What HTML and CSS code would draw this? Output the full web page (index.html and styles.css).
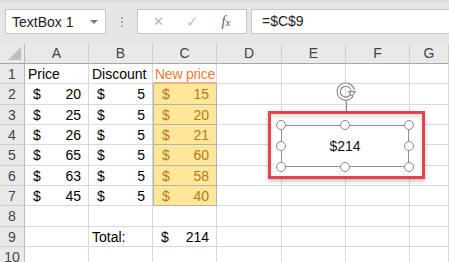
FILE: index.html
```html
<!DOCTYPE html>
<html lang="en">
<head>
    <meta charset="UTF-8">
    <title>Excel - TextBox</title>
    <link rel="stylesheet" href="styles.css">
</head>
<body>
    <div class="formula-bar">
        <div class="name-box">
            <span>TextBox 1</span>
            <span class="caret"></span>
        </div>
        <div class="grip"><i></i><i></i><i></i></div>
        <div class="fx-buttons">
            <span class="fx-cancel">&#x2715;</span>
            <span class="fx-enter">&#x2713;</span>
            <span class="fx-label">f<small>x</small></span>
        </div>
        <div class="formula-input">=$C$9</div>
    </div>

    <div class="sheet">
        <div class="grid">
            <div class="corner"><span class="tri"></span></div>
            <div class="col-head">A</div>
            <div class="col-head">B</div>
            <div class="col-head">C</div>
            <div class="col-head">D</div>
            <div class="col-head">E</div>
            <div class="col-head">F</div>
            <div class="col-head">G</div>

            <div class="row-head">1</div>
            <div class="cell">Price</div>
            <div class="cell">Discount</div>
            <div class="cell heading">New price</div>
            <div class="cell"></div><div class="cell"></div><div class="cell"></div><div class="cell"></div>

            <div class="row-head">2</div>
            <div class="cell acc"><span>$</span><span>20</span></div>
            <div class="cell acc"><span>$</span><span>5</span></div>
            <div class="cell acc neutral"><span>$</span><span>15</span></div>
            <div class="cell"></div><div class="cell"></div><div class="cell"></div><div class="cell"></div>

            <div class="row-head">3</div>
            <div class="cell acc"><span>$</span><span>25</span></div>
            <div class="cell acc"><span>$</span><span>5</span></div>
            <div class="cell acc neutral"><span>$</span><span>20</span></div>
            <div class="cell"></div><div class="cell"></div><div class="cell"></div><div class="cell"></div>

            <div class="row-head">4</div>
            <div class="cell acc"><span>$</span><span>26</span></div>
            <div class="cell acc"><span>$</span><span>5</span></div>
            <div class="cell acc neutral"><span>$</span><span>21</span></div>
            <div class="cell"></div><div class="cell"></div><div class="cell"></div><div class="cell"></div>

            <div class="row-head">5</div>
            <div class="cell acc"><span>$</span><span>65</span></div>
            <div class="cell acc"><span>$</span><span>5</span></div>
            <div class="cell acc neutral"><span>$</span><span>60</span></div>
            <div class="cell"></div><div class="cell"></div><div class="cell"></div><div class="cell"></div>

            <div class="row-head">6</div>
            <div class="cell acc"><span>$</span><span>63</span></div>
            <div class="cell acc"><span>$</span><span>5</span></div>
            <div class="cell acc neutral"><span>$</span><span>58</span></div>
            <div class="cell"></div><div class="cell"></div><div class="cell"></div><div class="cell"></div>

            <div class="row-head">7</div>
            <div class="cell acc"><span>$</span><span>45</span></div>
            <div class="cell acc"><span>$</span><span>5</span></div>
            <div class="cell acc neutral"><span>$</span><span>40</span></div>
            <div class="cell"></div><div class="cell"></div><div class="cell"></div><div class="cell"></div>

            <div class="row-head">8</div>
            <div class="cell"></div><div class="cell"></div><div class="cell"></div>
            <div class="cell"></div><div class="cell"></div><div class="cell"></div><div class="cell"></div>

            <div class="row-head">9</div>
            <div class="cell"></div>
            <div class="cell">Total:</div>
            <div class="cell acc"><span>$</span><span>214</span></div>
            <div class="cell"></div><div class="cell"></div><div class="cell"></div><div class="cell"></div>

            <div class="row-head">10</div>
            <div class="cell"></div><div class="cell"></div><div class="cell"></div>
            <div class="cell"></div><div class="cell"></div><div class="cell"></div><div class="cell"></div>
        </div>

        <!-- selected text box, highlighted with a red frame -->
        <div class="rotate">
            <svg width="20" height="20" viewBox="0 0 20 20">
                <path d="M15.8 13.2 A7 7 0 1 1 16.6 8.2" fill="none" stroke="#8a8a8a" stroke-width="4.4"/>
                <path d="M15.8 13.2 A7 7 0 1 1 16.6 8.2" fill="none" stroke="#fff" stroke-width="2"/>
                <path d="M12.6 9.6 L19.4 9.6 L16 14 Z" fill="#fff" stroke="#8a8a8a" stroke-width="1.1" stroke-linejoin="round"/>
            </svg>
        </div>
        <div class="rotate-stem"></div>
        <div class="highlight">
            <div class="textbox">
                <span class="tb-text">$214</span>
                <i class="h h-tl"></i><i class="h h-tc"></i><i class="h h-tr"></i>
                <i class="h h-ml"></i><i class="h h-mr"></i>
                <i class="h h-bl"></i><i class="h h-bc"></i><i class="h h-br"></i>
            </div>
        </div>
    </div>
</body>
</html>
```

FILE: styles.css
```css
* {
    box-sizing: border-box;
    margin: 0;
    padding: 0;
}
body {
    width: 449px;
    height: 262px;
    overflow: hidden;
    background: #fff;
    font-family: 'Liberation Sans', Arial, sans-serif;
    font-size: 14px;
    color: #000;
}

/* formula bar */
.formula-bar {
    height: 44px;
    background: #e6e6e6;
    border-top: 2px solid #dcdcdc;
    display: flex;
    align-items: flex-start;
    padding: 7px 0 0 5px;
}
.name-box {
    width: 101px;
    height: 25px;
    background: #fff;
    border: 1px solid #c6c6c6;
    display: flex;
    align-items: center;
    justify-content: space-between;
    padding: 0 6px 0 6px;
    font-size: 14px;
    color: #222;
}
.caret {
    width: 0;
    height: 0;
    border-left: 4px solid transparent;
    border-right: 4px solid transparent;
    border-top: 4px solid #7a7a7a;
    margin-right: 1px;
}
.grip {
    width: 31px;
    height: 25px;
    display: flex;
    flex-direction: column;
    align-items: center;
    justify-content: center;
    gap: 2px;
}
.grip i {
    width: 2px;
    height: 2px;
    background: #a8a8a8;
}
.fx-buttons {
    width: 110px;
    height: 25px;
    background: #fff;
    border: 1px solid #c6c6c6;
    display: flex;
    align-items: center;
    color: #b4b4b4;
}
.fx-cancel {
    width: 38px;
    text-align: center;
    font-size: 13px;
    padding-left: 2px;
}
.fx-enter {
    width: 32px;
    text-align: center;
    font-size: 15px;
    color: #bdbdbd;
}
.fx-label {
    width: 36px;
    text-align: center;
    font-family: 'Liberation Serif', serif;
    font-style: italic;
    font-size: 14px;
    color: #555;
}
.fx-label small {
    font-size: 11px;
}
.formula-input {
    flex: 1;
    height: 25px;
    margin-left: 4px;
    background: #fff;
    border: 1px solid #c6c6c6;
    border-right: none;
    line-height: 23px;
    padding-left: 10px;
    font-size: 14px;
    color: #222;
}

/* sheet */
.sheet {
    position: relative;
}
.grid {
    display: grid;
    grid-template-columns: 25px 64px 64px 64px 65px 64px 64px 1fr;
    grid-template-rows: 20px repeat(10, 20.33px);
}
.corner, .col-head, .row-head {
    background: #e9e9e9;
    color: #444;
}
.corner {
    border-right: 1px solid #b8b8b8;
    border-bottom: 1px solid #a8a8a8;
    position: relative;
}
.tri {
    position: absolute;
    right: 3px;
    bottom: 3px;
    width: 0;
    height: 0;
    border-left: 13px solid transparent;
    border-bottom: 13px solid #bdbdbd;
}
.col-head {
    text-align: center;
    line-height: 19px;
    border-right: 1px solid #cdcdcd;
    border-bottom: 1px solid #a8a8a8;
}
.row-head {
    text-align: center;
    line-height: 21px;
    border-right: 1px solid #b8b8b8;
    border-bottom: 1px solid #cfcfcf;
}
.cell {
    border-right: 1px solid #d9d9d9;
    border-bottom: 1px solid #d9d9d9;
    line-height: 21px;
    padding-left: 3px;
    white-space: nowrap;
    overflow: hidden;
}
.acc {
    display: flex;
    justify-content: space-between;
    padding: 0 7px 0 8px;
}
.heading {
    color: #ed7d31;
    border-bottom: 2px solid #f4b183;
    line-height: 20px;
    padding-left: 2px;
    letter-spacing: -0.25px;
}
.neutral {
    background: #ffe699;
    color: #b07c1c;
    border: 1px solid #b2b2b2;
    border-top: none;
}

/* text box overlay */
.rotate {
    position: absolute;
    left: 336px;
    top: 38px;
    width: 20px;
    height: 20px;
}
.rotate-stem {
    position: absolute;
    left: 346px;
    top: 57px;
    width: 1px;
    height: 20px;
    background: #8a8a8a;
}
.highlight {
    position: absolute;
    left: 268px;
    top: 67px;
    width: 157px;
    height: 68px;
    background: #fff;
    border: 3px solid #e5434b;
    box-shadow: 0 2px 4px rgba(0, 0, 0, 0.25), inset 0 3px 4px rgba(0, 0, 0, 0.12);
    padding: 11px 13px 9px 10px;
}
.textbox {
    position: relative;
    width: 128px;
    height: 42px;
    border: 1px solid #8f8f8f;
    display: flex;
    align-items: center;
    justify-content: center;
}
.tb-text {
    font-size: 14px;
    color: #111;
}
.h {
    position: absolute;
    width: 10px;
    height: 10px;
    border: 1.5px solid #888;
    border-radius: 50%;
    background: #fff;
}
.h-tl { left: -6px; top: -6px; }
.h-tc { left: 58px; top: -6px; }
.h-tr { right: -6px; top: -6px; }
.h-ml { left: -6px; top: 15px; }
.h-mr { right: -6px; top: 15px; }
.h-bl { left: -6px; bottom: -6px; }
.h-bc { left: 58px; bottom: -6px; }
.h-br { right: -6px; bottom: -6px; }
```
